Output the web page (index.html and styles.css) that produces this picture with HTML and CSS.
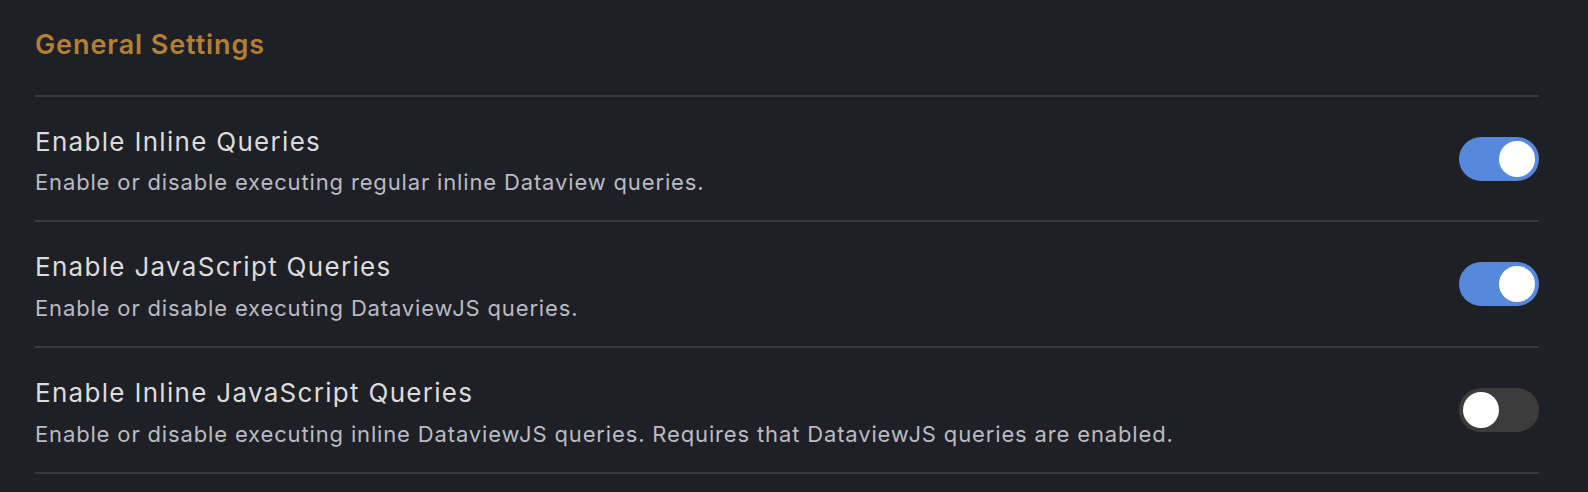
FILE: index.html
```html
<!DOCTYPE html>
<html lang="en">
<head>
<meta charset="utf-8">
<link rel="stylesheet" href="styles.css">
</head>
<body>
<div class="panel">
  <h2 class="heading">General Settings</h2>
  <div class="item">
    <div class="info">
      <div class="name">Enable Inline Queries</div>
      <div class="desc">Enable or disable executing regular inline Dataview queries.</div>
    </div>
    <div class="toggle on"><span class="knob"></span></div>
  </div>
  <div class="item">
    <div class="info">
      <div class="name">Enable JavaScript Queries</div>
      <div class="desc">Enable or disable executing DataviewJS queries.</div>
    </div>
    <div class="toggle on"><span class="knob"></span></div>
  </div>
  <div class="item">
    <div class="info">
      <div class="name">Enable Inline JavaScript Queries</div>
      <div class="desc">Enable or disable executing inline DataviewJS queries. Requires that DataviewJS queries are enabled.</div>
    </div>
    <div class="toggle"><span class="knob"></span></div>
  </div>
</div>
</body>
</html>
```
FILE: styles.css
```css
html, body {
  margin: 0;
  padding: 0;
  background: #1e2025;
}
body {
  font-family: Inter, "Noto Sans", sans-serif;
  width: 1588px;
  height: 492px;
  overflow: hidden;
}
.panel {
  padding: 0 49px 0 35px;
}
.heading {
  margin: 0;
  height: 95px;
  box-sizing: border-box;
  padding-top: 28px;
  font-size: 27px;
  line-height: 34px;
  font-weight: 600;
  letter-spacing: 0.9px;
  color: #b47f37;
}
.item {
  display: flex;
  align-items: center;
  justify-content: space-between;
  height: 126px;
  box-sizing: border-box;
  border-top: 2px solid #38393d;
}
.item:first-of-type {
  height: 125px;
}
.item:last-child {
  height: 128px;
  border-bottom: 2px solid #38393d;
}
.info {
  display: flex;
  flex-direction: column;
  gap: 9.5px;
  padding-top: 4px;
}
.name {
  font-size: 26px;
  line-height: 34px;
  letter-spacing: 1.3px;
  color: #dcdcdc;
}
.desc {
  font-size: 22px;
  line-height: 28px;
  letter-spacing: 0.85px;
  color: #b9bcc3;
}
.toggle {
  width: 80px;
  height: 44px;
  border-radius: 22px;
  background: #3c3c3c;
  position: relative;
  flex: none;
}
.toggle.on {
  background: #5689dc;
}
.knob {
  position: absolute;
  top: 4px;
  left: 4px;
  width: 36px;
  height: 36px;
  border-radius: 50%;
  background: #ffffff;
}
.toggle.on .knob {
  left: 40px;
}
```
